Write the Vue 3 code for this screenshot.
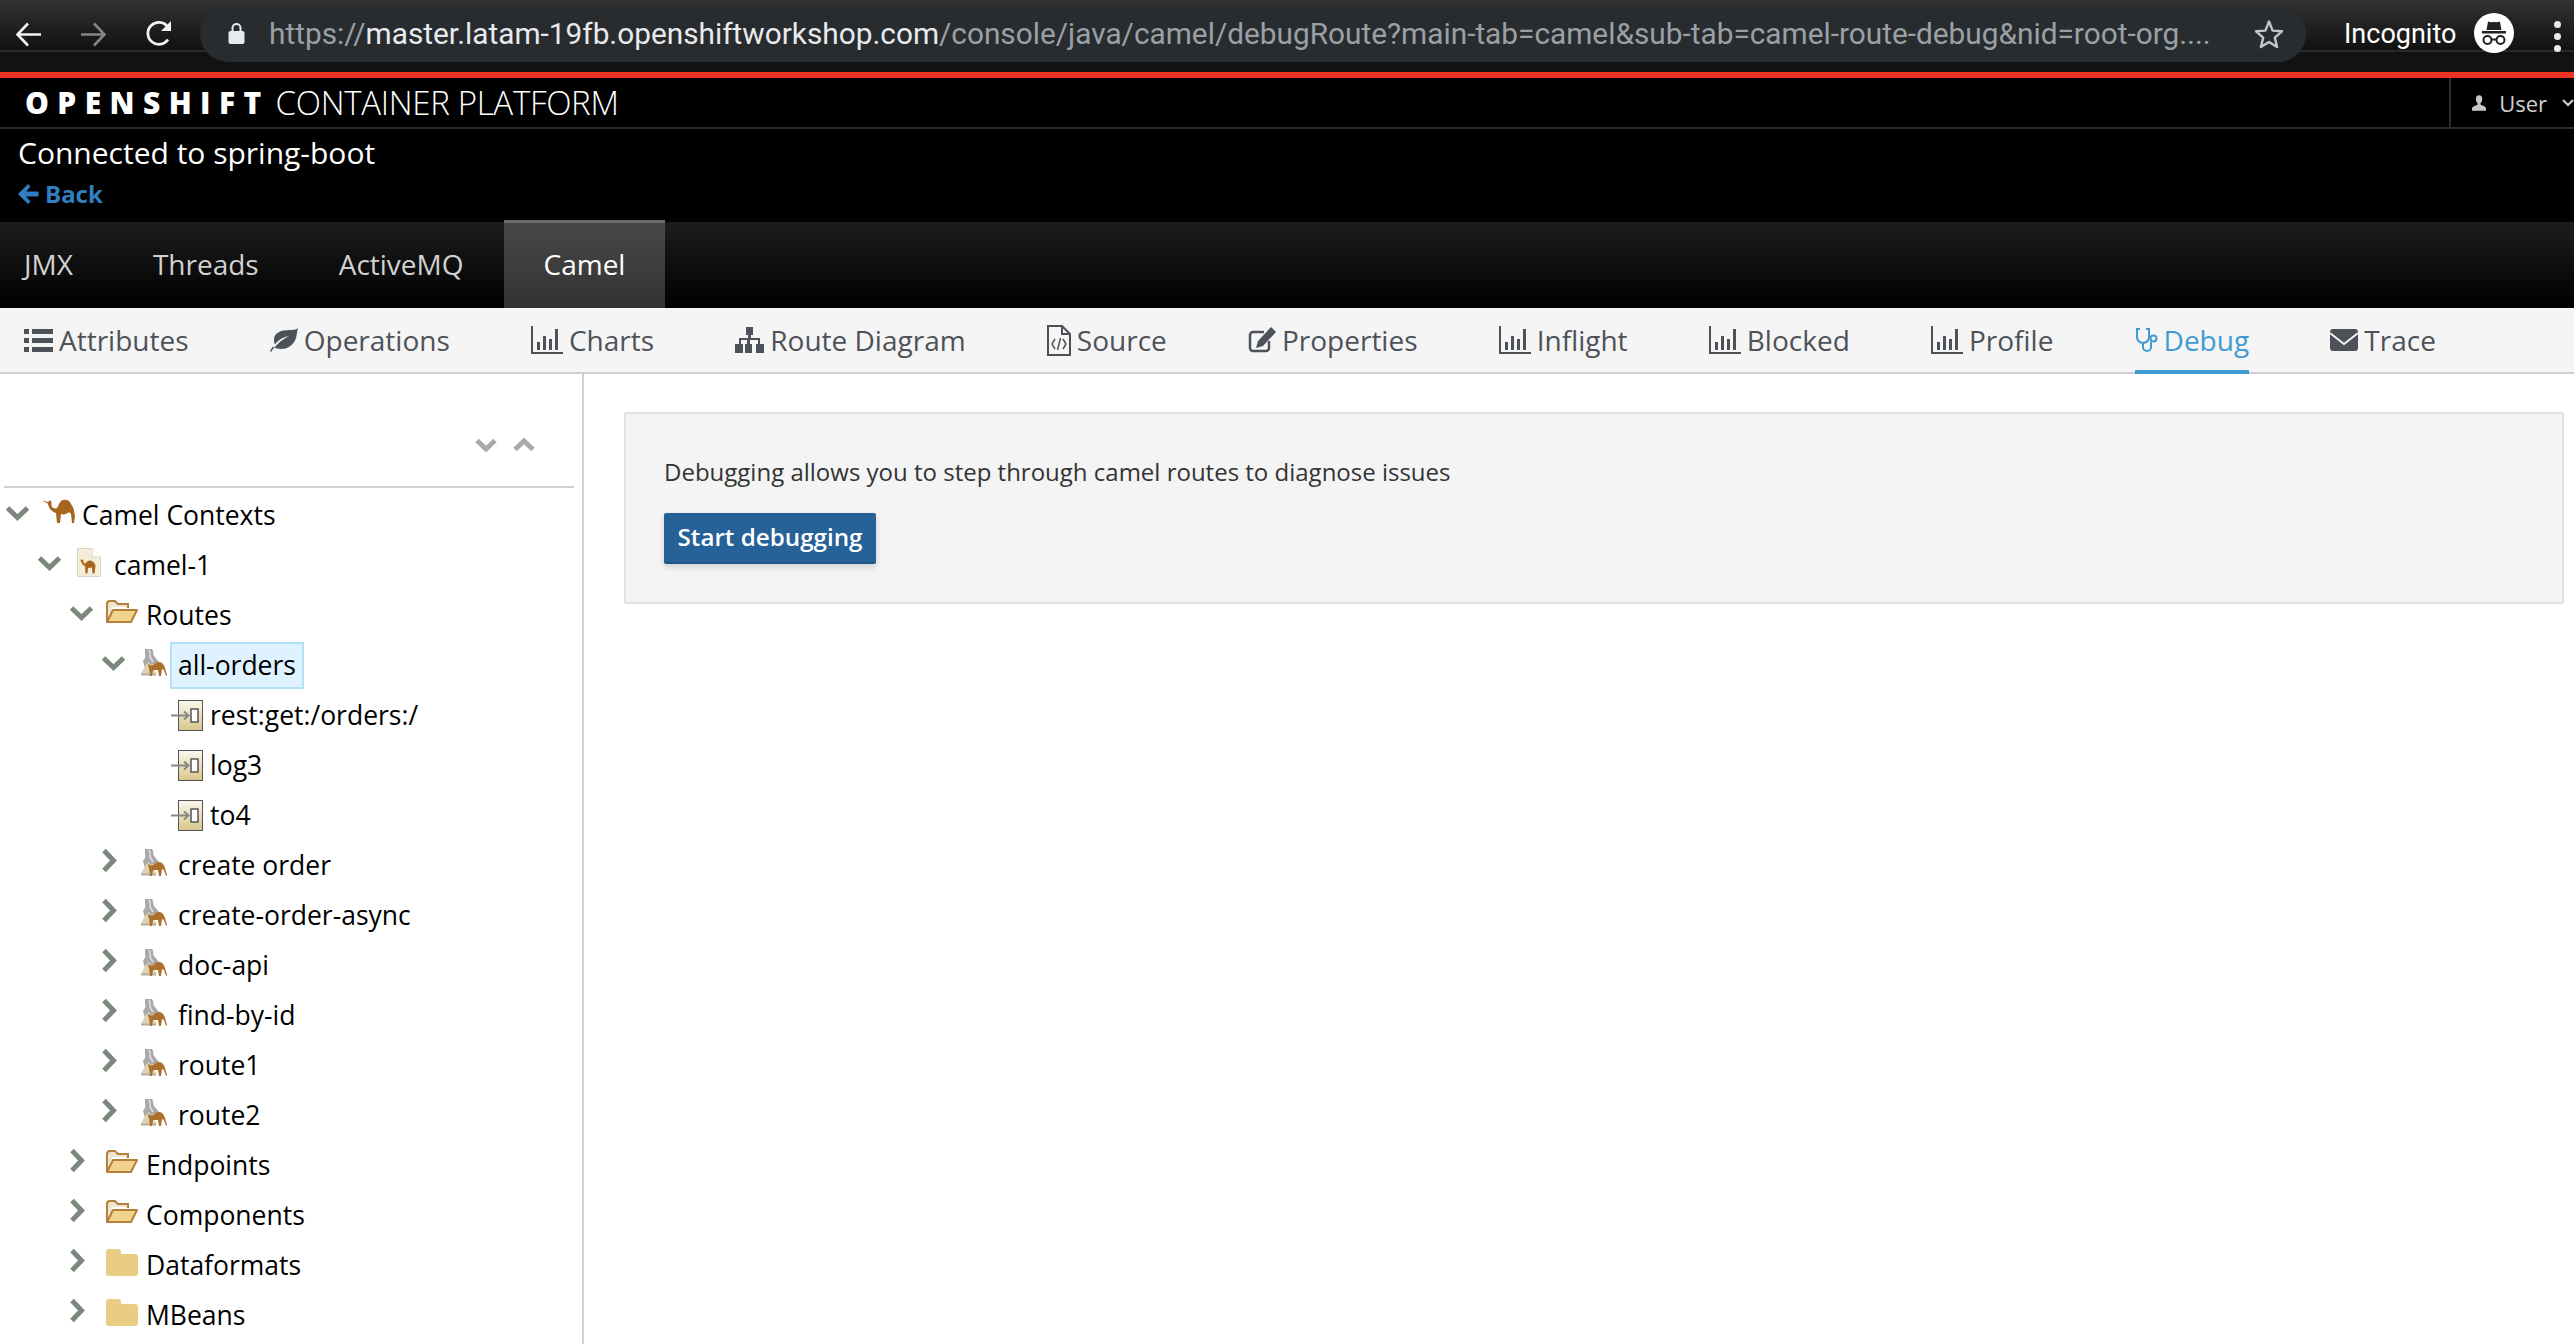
<template>
  <div class="screen">
    <!-- browser chrome -->
    <div class="chrome">
      <div class="chrome-line"></div>
      <div class="chrome-buttons">
        <svg width="27" height="27" viewBox="0 0 27 27" class="nav-ico"><path d="M26 13.5H3M13 2.5 2.5 13.5 13 24.5" fill="none" stroke="#f1f3f4" stroke-width="2.6"/></svg>
        <svg width="27" height="27" viewBox="0 0 27 27" class="nav-ico forward"><path d="M1 13.5H24M14 2.5 24.5 13.5 14 24.5" fill="none" stroke="#80868b" stroke-width="2.6"/></svg>
        <svg width="28" height="28" viewBox="0 0 28 28" class="nav-ico reload"><path d="M23 19.5A11 11 0 1 1 22.5 6.5" fill="none" stroke="#f1f3f4" stroke-width="2.8"/><path d="M26 1V11H16Z" fill="#f1f3f4"/></svg>
      </div>
      <div class="omnibox">
        <svg width="17" height="23" viewBox="0 0 17 23" class="lock"><path d="M4.5 10V6a4 4 0 0 1 8 0v4" fill="none" stroke="#e8eaed" stroke-width="2"/><rect x="0.5" y="9" width="16" height="13" rx="2" fill="#e8eaed"/></svg>
        <div class="url"><span class="dim">https://</span>master.latam-19fb.openshiftworkshop.com<span class="dim">/console/java/camel/debugRoute?main-tab=camel&amp;sub-tab=camel-route-debug&amp;nid=root-org....</span></div>
        <svg width="32" height="32" viewBox="0 0 32 32" class="star"><path d="M16 3.5 19.6 12.6 29 13.3 21.8 19.6 24.1 29 16 23.9 7.9 29 10.2 19.6 3 13.3 12.4 12.6Z" fill="none" stroke="#c4c7c9" stroke-width="2.4" stroke-linejoin="round"/></svg>
      </div>
      <div class="incognito">Incognito</div>
      <svg width="40" height="40" viewBox="0 0 40 40" class="spy">
        <circle cx="20" cy="20" r="20" fill="#fff"/>
        <path d="M8 18h24v2.4H8zM12.5 17l1.6-8.5c2 1 3.8 1 5.900 .2 2.100 .8 3.900 .8 5.900-.2l1.600 8.500z" fill="#202124"/>
        <circle cx="13.500" cy="27" r="4" fill="none" stroke="#202124" stroke-width="2"/>
        <circle cx="26.500" cy="27" r="4" fill="none" stroke="#202124" stroke-width="2"/>
        <path d="M17.500 26.500h5" stroke="#202124" stroke-width="2"/>
      </svg>
      <div class="kebab"><i></i><i></i><i></i></div>
    </div>

    <!-- masthead -->
    <div class="redline"></div>
    <header class="masthead">
      <div class="brand"><b>OPENSHIFT</b><span>CONTAINER PLATFORM</span></div>
      <div class="user-menu">
        <svg width="22" height="24" viewBox="0 0 20 22"><path d="M10 0c3 0 4.500 2.400 4.500 5.500 0 2.600-1 4.800-2.500 6v2c3 1.200 8 2.500 8 5.500v3H0v-3c0-3 5-4.300 8-5.500v-2C6.500 10.300 5.500 8.100 5.500 5.500 5.500 2.400 7 0 10 0z" fill="#c8c8c8"/></svg>
        <span>User</span>
        <svg width="12" height="8" viewBox="0 0 12 8" class="caret"><path d="M1 1l5 5 5-5" fill="none" stroke="#d1d1d1" stroke-width="2"/></svg>
      </div>
    </header>
    <section class="connected">
      <div class="conn-title">Connected to spring-boot</div>
      <a class="back">
        <svg width="21" height="20" viewBox="0 0 21 20"><path d="M10 0 0 10l10 10 2.500-2.500L8 12.500h12.500v-5H8l4.500-5z" fill="#2f7fc1"/></svg>
        Back
      </a>
    </section>

    <!-- level one nav -->
    <nav class="mainnav">
      <a v-for="t in mainTabs" :key="t" class="main-tab" :class="{ on: t === 'Camel' }">{{ t }}</a>
    </nav>

    <!-- level two nav -->
    <nav class="subnav">
      <a v-for="s in subTabs" :key="s.label" class="sub-tab" :class="{ active: s.label === 'Debug' }">
        <svg v-if="s.icon === 'list'" width="29" height="23" viewBox="0 0 29 23" fill="currentColor"><path d="M0 0h5v5H0zM8 0h21v5H8zM0 9h5v5H0zM8 9h21v5H8zM0 18h5v5H0zM8 18h21v5H8z"/></svg>
        <svg v-else-if="s.icon === 'leaf'" width="28" height="24" viewBox="0 0 28 24" fill="currentColor"><path d="M28 0c-1 1-3 2-8 2C10 2 4 5 4 12c0 2 .5 3.500 1 4.500C9 11 14 9 19 8c-6 3-11 7-15.500 12.500L1 24l-1-1c1-2 2-3 3-4.500 1 1 4 2.500 8 2.500 8 0 13-5 15-11 1-4 1-7 2-10z"/></svg>
        <svg v-else-if="s.icon === 'chart'" width="32" height="28" viewBox="0 0 32 28" fill="currentColor"><path d="M0 0h2v26h30v2H0zM6 16h3v8H6zM12 10h3v14h-3zM18 13h3v11h-3zM24 3h3v21h-3z"/></svg>
        <svg v-else-if="s.icon === 'sitemap'" width="29" height="26" viewBox="0 0 29 26" fill="currentColor"><path d="M11 0h7v8h-2v3h9v6h4v9h-8v-9h2v-4h-8v4h2v9h-7v-9h2v-4H6v4h2v9H0v-9h4v-6h9V8h-2z"/></svg>
        <svg v-else-if="s.icon === 'file'" width="24" height="31" viewBox="0 0 24 31"><path d="M1 1h14l8 8v21H1zM15 1v8h8" fill="none" stroke="currentColor" stroke-width="2"/><path d="M8 14l-3 5 3 5M16 14l3 5-3 5M13.500 13l-3 12" fill="none" stroke="currentColor" stroke-width="1.500"/></svg>
        <svg v-else-if="s.icon === 'pencil'" width="28" height="26" viewBox="0 0 28 26"><path d="M21 14v7a3 3 0 0 1-3 3H5a3 3 0 0 1-3-3V8a3 3 0 0 1 3-3h11" fill="none" stroke="currentColor" stroke-width="2.500"/><path d="M23 0l5 5-13 14-7 2 2-7z" fill="currentColor"/></svg>
        <svg v-else-if="s.icon === 'stethoscope'" width="23" height="24" viewBox="0 0 23 24"><path d="M5 1H2v8a6 6 0 0 0 12 0V1h-3M8 15v4a4 4 0 0 0 8 0v-5" fill="none" stroke="currentColor" stroke-width="2"/><circle cx="18.500" cy="10.500" r="3" fill="none" stroke="currentColor" stroke-width="2"/></svg>
        <svg v-else-if="s.icon === 'mail'" width="28" height="22" viewBox="0 0 28 22"><rect width="28" height="22" rx="3" fill="currentColor"/><path d="M0 4l14 11L28 4" fill="none" stroke="#f5f5f5" stroke-width="1.800"/></svg>
        <span>{{ s.label }}</span>
      </a>
    </nav>

    <div class="body">
      <aside class="side">
        <div class="tree-tools">
          <svg width="22" height="14" viewBox="0 0 22 14"><path d="M2 2.500l9 8.500 9-8.500" fill="none" stroke="#aaa" stroke-width="5"/></svg>
          <svg width="22" height="14" viewBox="0 0 22 14"><path d="M2 11.500L11 3l9 8.500" fill="none" stroke="#aaa" stroke-width="5"/></svg>
        </div>
        <div class="tree">
          <div v-for="n in nodes" :key="n.label" class="row" :style="{ paddingLeft: (5 + n.level * 32) + 'px' }">
            <span class="toggle">
              <svg v-if="n.open === true" width="25" height="16" viewBox="0 0 25 16" class="chev-d"><path d="M2.500 3l10 9.500L22.500 3" fill="none" stroke="#7c887c" stroke-width="5"/></svg>
              <svg v-else-if="n.open === false" width="17" height="25" viewBox="0 0 17 25" class="chev-r"><path d="M3 2.500l9.500 10L3 22.500" fill="none" stroke="#7c887c" stroke-width="5"/></svg>
            </span>
            <span class="node-icon">
              <svg v-if="n.icon === 'camel'" width="32" height="26" viewBox="0 0 32 26" class="i-camel"><path d="M0 1c2 1 3 2 5 2 1-1 2-2 3-1 1 2 0 4 1 6 1 1 3 2 5 1 2-2 2-7 6-8 4-1 7 1 8 4 1 2 3 4 3 7l1 5-1 7h-2l-1-9-2-2c-2 2-5 3-8 2l-1 9h-3l-1-10c-3-1-6-3-7-6-1-2-1-4-2-4C3 4 1 3 0 1z" fill="#a8651e"/></svg>
              <svg v-else-if="n.icon === 'context'" width="24" height="29" viewBox="0 0 24 29" class="i-ctx"><path d="M.5.500H15L23.500 9v19.500H.5z" fill="#f4eed9" stroke="#d6d6cc"/><path d="M15 .5V9h8.500" fill="#fff" stroke="#d6d6cc"/><path d="M3 11c1 1 2 1 3 .5l1 4c2 .5 3-3.500 6-3 3 0 5 3.500 5.500 5l-1 8h-2l-.5-6-4 .5-.5 5.500h-2l-.5-7.500c-2-.5-3-2-3.500-3.500z" fill="#a8651e"/></svg>
              <svg v-else-if="n.icon === 'open'" width="32" height="24" viewBox="0 0 32 24" class="i-open"><path d="M1 22V4a3 3 0 0 1 3-3h5l3 3h10v4" fill="#eee6d2" stroke="#b57f3c" stroke-width="2"/><path d="M6 7h14v3H6z" fill="#fff"/><path d="M1 22l6-12h24l-6 12z" fill="#f1d38e" stroke="#b57f3c" stroke-width="2" stroke-linejoin="round"/></svg>
              <svg v-else-if="n.icon === 'folder'" width="32" height="27" viewBox="0 0 32 27" class="i-open"><path d="M3 0h9a3 3 0 0 1 3 3v2l14 0a3 3 0 0 1 3 3v16a3 3 0 0 1-3 3H3a3 3 0 0 1-3-3V3a3 3 0 0 1 3-3z" fill="#e9cd85"/></svg>
              <svg v-else-if="n.icon === 'route'" width="26" height="27" viewBox="0 0 26 27" class="i-route"><path d="M4 0h7c2 3 1 5 2 7l5 6-14 6-2-7c2-3 3-4 2-7z" fill="#a9a9a9"/><path d="M8 1c2 3 1 5 1 7l3 5" fill="none" stroke="#dedede" stroke-width="1.600"/><path d="M0 25l4-8 4-4 8 12z" fill="#ddd3b4"/><path d="M0 25.500h15" stroke="#b3ad9a" stroke-width="2"/><path d="M7 15c2 1 3 2 5 1 2-2 4-3.500 7-3 3 1 4 3 5 6l2 7-1 1-2-6-2-1-1 7h-2l-1-6h-5l-1 6h-2l-1-8c-1-2-1-3-1-4z" fill="#ad6f2b"/></svg>
              <svg v-else-if="n.icon === 'step'" width="32" height="31" viewBox="0 0 32 31" class="i-step"><defs><linearGradient id="stepfill" x1="0" y1="0" x2="0" y2="1"><stop offset="0" stop-color="#fbf8ee"/><stop offset="1" stop-color="#d8c68a"/></linearGradient></defs><rect x="7.500" y="0.500" width="24" height="30" fill="url(#stepfill)" stroke="#555"/><rect x="20" y="9" width="7" height="13" fill="#fff" stroke="#555" stroke-width="1.500"/><path d="M0 15.500h17M13 11.500l4.500 4-4.500 4" fill="none" stroke="#888" stroke-width="2"/></svg>
            </span>
            <span class="node-label" :class="{ selected: n.selected }">{{ n.label }}</span>
          </div>
        </div>
      </aside>
      <main class="content">
        <div class="well">
          <p>Debugging allows you to step through camel routes to diagnose issues</p>
          <button type="button" class="start">Start debugging</button>
        </div>
      </main>
    </div>
  </div>
</template>

<script setup>
const mainTabs = ['JMX', 'Threads', 'ActiveMQ', 'Camel']

const subTabs = [
  { label: 'Attributes', icon: 'list' },
  { label: 'Operations', icon: 'leaf' },
  { label: 'Charts', icon: 'chart' },
  { label: 'Route Diagram', icon: 'sitemap' },
  { label: 'Source', icon: 'file' },
  { label: 'Properties', icon: 'pencil' },
  { label: 'Inflight', icon: 'chart' },
  { label: 'Blocked', icon: 'chart' },
  { label: 'Profile', icon: 'chart' },
  { label: 'Debug', icon: 'stethoscope' },
  { label: 'Trace', icon: 'mail' }
]

const nodes = [
  { label: 'Camel Contexts', level: 0, open: true, icon: 'camel' },
  { label: 'camel-1', level: 1, open: true, icon: 'context' },
  { label: 'Routes', level: 2, open: true, icon: 'open' },
  { label: 'all-orders', level: 3, open: true, icon: 'route', selected: true },
  { label: 'rest:get:/orders:/', level: 4, icon: 'step' },
  { label: 'log3', level: 4, icon: 'step' },
  { label: 'to4', level: 4, icon: 'step' },
  { label: 'create order', level: 3, open: false, icon: 'route' },
  { label: 'create-order-async', level: 3, open: false, icon: 'route' },
  { label: 'doc-api', level: 3, open: false, icon: 'route' },
  { label: 'find-by-id', level: 3, open: false, icon: 'route' },
  { label: 'route1', level: 3, open: false, icon: 'route' },
  { label: 'route2', level: 3, open: false, icon: 'route' },
  { label: 'Endpoints', level: 2, open: false, icon: 'open' },
  { label: 'Components', level: 2, open: false, icon: 'open' },
  { label: 'Dataformats', level: 2, open: false, icon: 'folder' },
  { label: 'MBeans', level: 2, open: false, icon: 'folder' }
]
</script>

<style>
body {
  background: #fff;
  overflow: hidden;
}
</style>

<style scoped>
.screen {
  width: 2574px;
  height: 1344px;
  overflow: hidden;
  background: #fff;
  font-family: "Open Sans", sans-serif;
  color: #000;
}

/* Browser chrome */
.chrome {
  position: relative;
  height: 72px;
  display: flex;
  align-items: flex-start;
  background: linear-gradient(#323232 0, #111 50px, #131313 72px);
}

.chrome-line {
  position: absolute;
  left: 0;
  right: 0;
  top: 50px;
  height: 2px;
  background: #2a2a2a;
}

.chrome-buttons {
  position: relative;
  display: flex;
  align-items: center;
  height: 68px;
  padding-left: 15px;
  width: 200px;
  box-sizing: border-box;
}

.nav-ico.forward {
  margin-left: 38px;
}

.nav-ico.reload {
  margin-left: 38px;
}

.omnibox {
  position: relative;
  width: 2106px;
  height: 57px;
  margin-top: 5px;
  border-radius: 28px;
  background: #292c2f;
  display: flex;
  align-items: center;
  padding-left: 28px;
  box-sizing: border-box;
}

.lock {
  flex-shrink: 0;
}

.url {
  margin-left: 24px;
  width: 1944px;
  white-space: nowrap;
  font-family: Roboto, sans-serif;
  font-size: 29.8px;
  color: #e8eaed;
}

.dim {
  color: #9aa0a6;
}

.star {
  margin-left: 40px;
  flex-shrink: 0;
}

.incognito {
  position: relative;
  margin-left: 38px;
  margin-top: 18px;
  font-family: Roboto, sans-serif;
  font-size: 27px;
  line-height: 32px;
  color: #fff;
}

.spy {
  position: relative;
  margin-left: 18px;
  margin-top: 13px;
}

.kebab {
  position: relative;
  margin-left: 40px;
  margin-top: 21px;
  display: flex;
  flex-direction: column;
  gap: 5px;
}

.kebab i {
  width: 7px;
  height: 7px;
  border-radius: 50%;
  background: #e8eaed;
}

.redline {
  height: 6px;
  background: #ee3224;
}

/* Masthead */
.masthead {
  height: 49px;
  box-sizing: content-box;
  display: flex;
  align-items: stretch;
  justify-content: space-between;
  background: #000;
  border-bottom: 2px solid #2c2c2c;
}

.brand {
  display: flex;
  align-items: center;
  padding-left: 25px;
  color: #fff;
  font-size: 33px;
  white-space: nowrap;
}

.brand b {
  font-weight: 800;
  letter-spacing: 8.4px;
  font-size: 30px;
}

.brand span {
  margin-left: 6px;
  font-weight: 300;
  letter-spacing: -0.3px;
}

.user-menu {
  width: 125px;
  flex-shrink: 0;
  display: flex;
  align-items: center;
  padding-left: 21px;
  box-sizing: border-box;
  border-left: 2px solid #2c2c2c;
  color: #d1d1d1;
  font-size: 22px;
  white-space: nowrap;
}

.user-menu span {
  margin-left: 13px;
}

.caret {
  margin-left: 15px;
  flex-shrink: 0;
}

.connected {
  height: 93px;
  background: #000;
  padding: 6px 0 0 18px;
  box-sizing: border-box;
}

.conn-title {
  font-size: 30px;
  line-height: 36px;
  color: #fff;
  white-space: nowrap;
}

.back {
  display: flex;
  align-items: center;
  gap: 6px;
  margin-top: 8px;
  font-size: 24px;
  line-height: 30px;
  font-weight: 700;
  color: #2f7fc1;
}

/* Main nav */
.mainnav {
  height: 86px;
  display: flex;
  background: linear-gradient(#1d1d1d, #000);
}

.main-tab {
  padding: 0 40px;
  margin-top: -2px;
  height: 88px;
  box-sizing: border-box;
  display: flex;
  align-items: center;
  font-size: 28px;
  color: #d1d1d1;
  white-space: nowrap;
}

.main-tab:first-child {
  padding-left: 24px;
}

.main-tab.on {
  color: #fff;
  border-top: 3px solid #6a6a6a;
  padding-bottom: 3px;
  background: linear-gradient(#474747, #333);
}

/* Sub nav */
.subnav {
  height: 66px;
  box-sizing: border-box;
  display: flex;
  gap: 81.2px;
  padding-left: 24px;
  background: #f5f5f5;
  border-bottom: 2px solid #d1d1d1;
}

.sub-tab {
  position: relative;
  display: flex;
  align-items: center;
  gap: 6px;
  height: 64px;
  font-size: 28px;
  color: #4d5258;
  white-space: nowrap;
}

.sub-tab svg {
  flex-shrink: 0;
}

.sub-tab.active {
  color: #3f9bd4;
}

.sub-tab.active::after {
  content: "";
  position: absolute;
  left: 0;
  right: 0;
  bottom: -2px;
  height: 4px;
  background: #3f9bd4;
}

/* Body */
.body {
  display: flex;
  height: 970px;
}

.side {
  width: 584px;
  flex-shrink: 0;
  box-sizing: border-box;
  border-right: 2px solid #d1d1d1;
  padding-right: 8px;
}

.tree-tools {
  height: 114px;
  margin-left: 4px;
  box-sizing: border-box;
  border-bottom: 2px solid #d1d1d1;
  display: flex;
  justify-content: flex-end;
  align-items: flex-start;
  gap: 16px;
  padding: 64px 39px 0 0;
}

.tree {
  margin-top: 2px;
}

.row {
  height: 50px;
  display: flex;
  align-items: center;
  white-space: nowrap;
}

.toggle {
  width: 38px;
  flex-shrink: 0;
  display: flex;
}

.chev-d {
  margin-top: -4px;
}

.chev-r {
  margin-top: -10px;
}

.node-icon {
  width: 39px;
  flex-shrink: 0;
  display: flex;
}

.i-camel {
  margin-top: -6px;
}

.i-ctx {
  margin: -6px 0 0 2px;
}

.i-open {
  margin: -6px 0 0 -1px;
}

.i-route {
  margin: -6px 0 0 2px;
}

.node-label {
  font-size: 26.5px;
  line-height: 43px;
  padding: 0 6px;
  margin-left: -8px;
  border: 2px solid transparent;
}

.node-label.selected {
  background: #def3ff;
  border-color: #b3e0f7;
}

/* Content */
.content {
  flex: 1;
  padding: 38px 10px 0 40px;
}

.well {
  height: 192px;
  box-sizing: border-box;
  background: #f4f4f4;
  border: 2px solid #e3e3e3;
  border-radius: 2px;
  padding: 39px 0 0 38px;
}

.well p {
  margin: 0;
  font-size: 24px;
  line-height: 38px;
  color: #333;
  white-space: nowrap;
}

.start {
  display: block;
  margin-top: 22px;
  width: 212px;
  height: 51px;
  padding: 0 0 2px;
  border: 0;
  border-bottom: 2px solid #1f5582;
  border-radius: 2px;
  background: #266297;
  box-shadow: 0 3px 6px rgba(0, 0, 0, 0.15);
  color: #fff;
  font-family: "Open Sans", sans-serif;
  font-size: 24.2px;
  font-weight: 600;
}
</style>
